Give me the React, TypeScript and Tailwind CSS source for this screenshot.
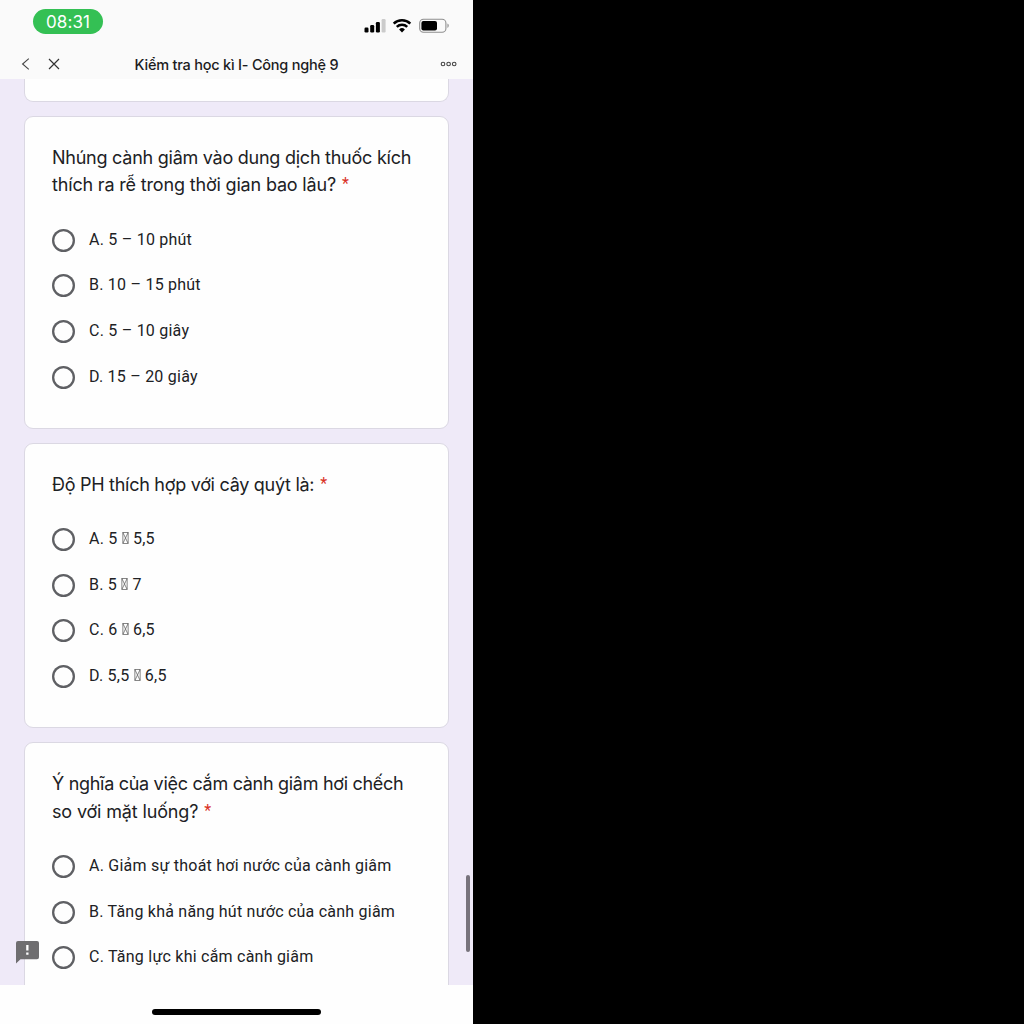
import React from 'react';

type Line = { text: string; className: string };

type Question = {
  id: number;
  title: Line[];
  options: string[];
};

// '|' marks a character the form font has no glyph for
const questions: Question[] = [
  {
    id: 1,
    title: [
      { text: 'Nhúng cành giâm vào dung dịch thuốc kích', className: 'tracking-[-0.25px]' },
      { text: 'thích ra rễ trong thời gian bao lâu?', className: 'tracking-[-0.17px]' },
    ],
    options: ['A. 5 – 10 phút', 'B. 10 – 15 phút', 'C. 5 – 10 giây', 'D. 15 – 20 giây'],
  },
  {
    id: 2,
    title: [{ text: 'Độ PH thích hợp với cây quýt là:', className: 'tracking-[-0.28px]' }],
    options: ['A. 5 | 5,5', 'B. 5 | 7', 'C. 6 | 6,5', 'D. 5,5 | 6,5'],
  },
  {
    id: 3,
    title: [
      { text: 'Ý nghĩa của việc cắm cành giâm hơi chếch', className: 'tracking-[-0.3px]' },
      { text: 'so với mặt luống?', className: 'tracking-[-0.15px]' },
    ],
    options: [
      'A. Giảm sự thoát hơi nước của cành giâm',
      'B. Tăng khả năng hút nước của cành giâm',
      'C. Tăng lực khi cắm cành giâm',
    ],
  },
];

const MissingGlyph: React.FC = () => (
  <svg className="inline-block align-[0px]" width="7" height="12" viewBox="0 0 7 12" fill="none" stroke="#555" strokeWidth="0.7">
    <rect x="0.9" y="0.6" width="5.2" height="10.8" />
    <path d="M.9.6 6.1 11.4M6.1.6.9 11.4" />
  </svg>
);

const Option: React.FC<{ label: string }> = ({ label }) => {
  const parts = label.split('|');

  return (
    <label className="flex h-[45.7px] items-center">
      <span className="size-[23px] shrink-0 rounded-full shadow-[inset_0_0_0_2.3px_#5f6064]" />
      <span className="ml-[14px] pb-px whitespace-pre text-[16px] leading-5 tracking-[0.23px] text-[#202124]">
        {parts[0]}
        {parts.length > 1 && <MissingGlyph />}
        {parts[1]}
      </span>
    </label>
  );
};

const QuestionCard: React.FC<{ question: Question }> = ({ question }) => (
  <section className="shrink-0 rounded-[9px] border border-[#dbd8e3] bg-[#fefefe] px-[27px] pt-[27px] pb-[27.6px]">
    <h2 className="mb-[18.4px] font-['Inter',sans-serif] text-[18px] leading-[27.5px] text-[#202124]">
      {question.title.map((line, i) => (
        <span key={line.text} className="block h-[27.5px] whitespace-nowrap">
          <span className={line.className}>{line.text}</span>
          {i === question.title.length - 1 && (
            <span className="ml-[6px] align-[2px] font-['Roboto',sans-serif] text-[16px] leading-none text-[#d93025]">*</span>
          )}
        </span>
      ))}
    </h2>
    {question.options.map((option) => (
      <Option key={option} label={option} />
    ))}
  </section>
);

const StatusBar: React.FC = () => (
  <div className="flex h-[50px] items-start justify-between pl-[33px] pr-[24px]">
    <div className="mt-[9px] flex h-[25px] w-[70px] items-center justify-center rounded-full bg-[#34c054] pt-px text-[17px] leading-none tracking-[0.1px] text-white font-['Inter',sans-serif]">
      08:31
    </div>
    <div className="mt-[18px] flex items-start">
      <svg width="23" height="16" viewBox="0 0 23 16">
        <rect x="0.5" y="9.5" width="4" height="5" rx="1.2" />
        <rect x="6.2" y="7" width="4" height="7.5" rx="1.2" />
        <rect x="11.9" y="4" width="4" height="10.5" rx="1.2" />
        <rect x="17.6" y="1" width="4" height="13.5" rx="1.2" fill="#cbcbcb" />
      </svg>
      <svg className="ml-[5px]" width="20" height="15" viewBox="0 0 20 15" fill="none" stroke="#000" strokeWidth="2.5">
        <path d="M1.7 5.6a11.8 11.8 0 0 1 16.6 0" />
        <path d="M4.8 8.8a7.4 7.4 0 0 1 10.4 0" />
        <path d="M10 14.4 7.1 11.4a4.2 4.2 0 0 1 5.8 0Z" fill="#000" stroke="none" />
      </svg>
      <svg className="ml-[7px] mr-[-1px]" width="31" height="16" viewBox="0 0 31 16">
        <rect x="0.7" y="1.3" width="26.2" height="13" rx="3.8" fill="none" stroke="#8e8e8e" strokeWidth="1.1" />
        <rect x="2.4" y="3" width="15.6" height="9.6" rx="2" />
        <path d="M28.4 5.6v4.4a2.4 2.4 0 0 0 0-4.4Z" fill="#9a9a9a" />
      </svg>
    </div>
  </div>
);

const NavBar: React.FC = () => (
  <div className="grid h-[28px] grid-cols-[80px_1fr_80px] items-center">
    <div className="flex items-center pl-[21px]">
      <svg width="9" height="12" viewBox="0 0 9 12" fill="none" stroke="#444" strokeWidth="1.1">
        <path d="M7.8.7 1.6 6l6.2 5.3" />
      </svg>
      <svg className="ml-[18px]" width="12" height="12" viewBox="0 0 12 12" fill="none" stroke="#333" strokeWidth="1.2">
        <path d="M1 1l10 10M11 1 1 11" />
      </svg>
    </div>
    <h1 className="whitespace-nowrap pt-px text-center font-['Inter',sans-serif] text-[14.5px] font-medium tracking-[-0.22px] text-[#1c1c1e]">
      Kiểm tra học kì I- Công nghệ 9
    </h1>
    <div className="flex justify-end pr-[16px]">
      <svg width="17" height="6" viewBox="0 0 17 6" fill="none" stroke="#444" strokeWidth="1.1">
        <circle cx="3" cy="3" r="1.8" />
        <circle cx="8.6" cy="3" r="1.8" />
        <circle cx="14.2" cy="3" r="1.8" />
      </svg>
    </div>
  </div>
);

const App: React.FC = () => {
  return (
    <div className="h-screen w-full overflow-hidden bg-black font-['Roboto',sans-serif]">
      <div className="flex h-full w-[473px] flex-col bg-[#fefefe]">
        <header className="h-[79px] shrink-0 bg-[#fafafa]">
          <StatusBar />
          <NavBar />
        </header>

        <main className="relative h-[906px] shrink-0 overflow-hidden bg-[#efeaf8]">
          <div className="flex flex-col gap-[14.3px] px-[24px]">
            {/* end of the previous question */}
            <div className="h-[22.5px] shrink-0 rounded-b-[9px] border border-t-0 border-[#dbd8e3] bg-[#fefefe]" />
            {questions.map((question) => (
              <QuestionCard key={question.id} question={question} />
            ))}
          </div>

          {/* report a problem */}
          <svg className="absolute left-[16px] top-[862px]" width="23" height="23" viewBox="0 0 23 23">
            <path d="M2 0h19a2 2 0 0 1 2 2v14.2a2 2 0 0 1-2 2H4.5L0 22.5V2a2 2 0 0 1 2-2Z" fill="#6f6e70" />
            <path d="M10.2 4h2.3v5.500h-2.3zM10.2 11.5h2.3v2.3h-2.3z" fill="#fff" />
          </svg>

          {/* scroll thumb */}
          <div className="absolute right-[3px] top-[796px] h-[77px] w-[4px] rounded-full bg-[#77737c]" />
        </main>

        <footer className="flex h-[39px] justify-center pt-[24px]">
          <div className="h-[6px] w-[169px] rounded-full bg-black" />
        </footer>
      </div>
    </div>
  );
};

export default App;
